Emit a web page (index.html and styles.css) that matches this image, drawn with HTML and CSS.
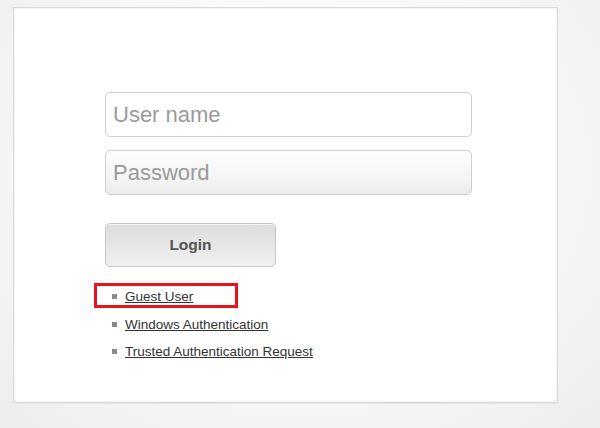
FILE: index.html
```html
<!DOCTYPE html>
<html lang="en">
<head>
    <meta charset="UTF-8">
    <meta name="viewport" content="width=device-width, initial-scale=1.0">
    <title>Login</title>
    <link rel="stylesheet" href="styles.css">
</head>
<body>
    <div class="login-panel">
        <form class="login-form">
            <input type="text" class="field field-user" placeholder="User name">
            <input type="password" class="field field-pass" placeholder="Password">
            <button type="button" class="login-btn">Login</button>
            <ul class="auth-links">
                <li class="highlighted"><a href="#">Guest User</a></li>
                <li><a href="#">Windows Authentication</a></li>
                <li><a href="#">Trusted Authentication Request</a></li>
            </ul>
        </form>
    </div>
</body>
</html>
```

FILE: styles.css
```css
html, body {
    height: 100%;
}
body {
    margin: 0;
    font-family: "Liberation Sans", Arial, sans-serif;
    background: radial-gradient(ellipse at 50% 40%, #ffffff 0%, #f9f9f9 50%, #ededed 100%);
    overflow: hidden;
}
.login-panel {
    box-sizing: border-box;
    width: 545px;
    height: 396px;
    margin: 7px 0 0 13px;
    background-color: white;
    border: 1px solid #d9d9d9;
    box-shadow: 0 1px 0 #e6e6e6, inset 0 0 0 1px #f4f4f4;
    padding: 84px 0 0 91px;
}
.login-form {
    display: flex;
    flex-direction: column;
    align-items: flex-start;
}
.field {
    box-sizing: border-box;
    width: 367px;
    height: 45px;
    border: 1px solid #cfcfcf;
    border-radius: 5px;
    padding: 0 7px;
    font-family: "Liberation Sans", Arial, sans-serif;
    font-size: 22px;
    color: #555;
    outline: none;
}
.field::placeholder {
    color: #9a9a9a;
}
.field-user {
    background-color: white;
    margin-bottom: 13px;
}
.field-pass {
    background: linear-gradient(to bottom, #fdfdfd 0%, #f5f5f5 60%, #ececec 100%);
    margin-bottom: 28px;
}
.login-btn {
    box-sizing: border-box;
    width: 171px;
    height: 44px;
    border: 1px solid #c6c6c6;
    border-radius: 5px;
    background: linear-gradient(to bottom, #dcdcdc 0%, #e6e6e6 50%, #f1f1f1 100%);
    box-shadow: inset 0 1px 0 #f6f6f6;
    font-family: "Liberation Sans", Arial, sans-serif;
    font-size: 15.5px;
    font-weight: bold;
    color: #555;
    cursor: pointer;
}
.auth-links {
    list-style-type: none;
    margin: 16px 0 0 0;
    padding: 0;
}
.auth-links li {
    position: relative;
    display: flex;
    align-items: center;
    height: 27.5px;
    padding-left: 20px;
    font-size: 13.5px;
}
.auth-links li::before {
    content: "";
    position: absolute;
    left: 7px;
    top: 11px;
    width: 5px;
    height: 5px;
    background-color: #8a8a8a;
}
.auth-links a {
    color: #333;
    text-decoration: underline;
}
.highlighted::after {
    content: "";
    position: absolute;
    left: -11px;
    top: 0;
    width: 138px;
    height: 19px;
    border: 3px solid #e8141c;
}
```
